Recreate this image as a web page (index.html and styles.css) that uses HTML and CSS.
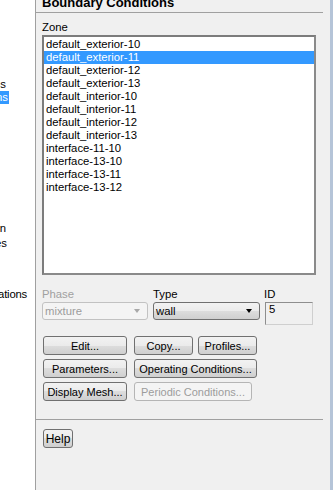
FILE: index.html
```html
<!DOCTYPE html>
<html lang="en">
<head>
    <meta charset="UTF-8">
    <meta name="viewport" content="width=device-width, initial-scale=1.0">
    <title>Boundary Conditions</title>
    <link rel="stylesheet" href="styles.css">
</head>
<body>
    <div class="window">
        <!-- tree on the left, cut off by the panel -->
        <div class="tree">
            <div class="tree-row row-cell"><span>Cell Zone Conditions</span></div>
            <div class="tree-row row-bc"><span class="tree-sel">Boundary Conditions</span></div>
            <div class="tree-row row-init"><span>Solution Initialization</span></div>
            <div class="tree-row row-calc"><span>Calculation Activities</span></div>
            <div class="tree-row row-graph"><span>Graphics and Animations</span></div>
        </div>

        <!-- task panel -->
        <div class="panel">
            <div class="panel-title">Boundary Conditions</div>
            <div class="rule"></div>

            <div class="panel-body">
                <div class="label zone-label">Zone</div>
                <ul class="zone-list">
                    <li>default_exterior-10</li>
                    <li class="selected">default_exterior-11</li>
                    <li>default_exterior-12</li>
                    <li>default_exterior-13</li>
                    <li>default_interior-10</li>
                    <li>default_interior-11</li>
                    <li>default_interior-12</li>
                    <li>default_interior-13</li>
                    <li>interface-11-10</li>
                    <li>interface-13-10</li>
                    <li>interface-13-11</li>
                    <li>interface-13-12</li>
                </ul>

                <div class="fields">
                    <div class="field field-phase">
                        <div class="label label-off">Phase</div>
                        <div class="combo combo-off">
                            <span>mixture</span>
                            <i class="arrow arrow-off"></i>
                        </div>
                    </div>
                    <div class="field field-type">
                        <div class="label">Type</div>
                        <div class="combo">
                            <span>wall</span>
                            <i class="arrow"></i>
                        </div>
                    </div>
                    <div class="field field-id">
                        <div class="label label-id">ID</div>
                        <div class="idbox">5</div>
                    </div>
                </div>

                <div class="buttons">
                    <div class="btn-row">
                        <button class="btn btn-wide">Edit...</button>
                        <button class="btn btn-small">Copy...</button>
                        <button class="btn btn-small">Profiles...</button>
                    </div>
                    <div class="btn-row">
                        <button class="btn btn-wide">Parameters...</button>
                        <button class="btn btn-oper">Operating Conditions...</button>
                    </div>
                    <div class="btn-row">
                        <button class="btn btn-wide">Display Mesh...</button>
                        <button class="btn btn-off btn-periodic" disabled>Periodic Conditions...</button>
                    </div>
                </div>
            </div>

            <div class="rule rule-bottom"></div>
            <div class="panel-foot">
                <button class="btn btn-help">Help</button>
            </div>
        </div>

        <div class="frame-edge"></div>
    </div>
</body>
</html>
```

FILE: styles.css
```css
body {
    margin: 0;
    padding: 0;
    font-family: "Liberation Sans", Arial, sans-serif;
    font-size: 11px;
    color: #000;
    background: #fff;
}
.window {
    display: flex;
    height: 490px;
    overflow: hidden;
}

/* tree */
.tree {
    flex: none;
    width: 35px;
    border-right: 1px solid #a0a0a0;
    background: #fff;
    font-size: 11.3px;
}
.tree-row {
    display: flex;
    justify-content: flex-end;
    height: 13px;
    line-height: 13px;
    overflow: hidden;
    white-space: nowrap;
}
.tree-row span {
    flex: none;
}
.row-cell {
    margin-top: 78px;
    padding-right: 29px;
}
.row-bc {
    padding-right: 26px;
}
.tree-sel {
    background: #3399ff;
    color: #fff;
    padding-right: 1px;
}
.row-init {
    margin-top: 118px;
    padding-right: 29px;
}
.row-calc {
    margin-top: 2px;
    padding-right: 28px;
}
.row-graph {
    margin-top: 38px;
    padding-right: 8px;
    letter-spacing: -0.2px;
}

/* panel */
.panel {
    flex: none;
    width: 294px;
    background: #f0f0f0;
}
.panel-title {
    margin-top: -4px;
    height: 16px;
    line-height: 13px;
    padding-left: 6px;
    font-size: 13px;
    font-weight: bold;
    white-space: nowrap;
}
.rule {
    height: 1px;
    margin-right: 7px;
    background: #a0a0a0;
}
.panel-body {
    padding: 0 14px 0 6px;
}
.label {
    height: 13px;
    line-height: 13px;
    font-size: 11.3px;
}
.zone-label {
    margin-top: 8px;
}
.zone-list {
    list-style: none;
    margin: 1px 0 0;
    padding: 1px 0 0;
    height: 240px;
    box-sizing: border-box;
    border: 2px solid;
    border-color: #7c7c7c #8a8a8a #8a8a8a #7c7c7c;
    background: #fff;
    font-size: 11.3px;
}
.zone-list li {
    height: 13px;
    line-height: 13px;
    padding-left: 2px;
    white-space: nowrap;
}
.zone-list li.selected {
    background: #3399ff;
    color: #fff;
}

/* phase / type / id */
.fields {
    display: flex;
    gap: 5px;
    margin-top: 13px;
}
.field .label {
    margin-bottom: 1px;
}
.field-phase {
    width: 106px;
}
.field-type {
    width: 107px;
}
.field-id {
    width: 48px;
}
.label-off {
    color: #a0a0a0;
}
.label-id {
    margin-left: -1px;
}
.combo {
    display: flex;
    align-items: center;
    justify-content: space-between;
    height: 18px;
    box-sizing: border-box;
    padding: 0 7px 0 2px;
    border: 1px solid #707070;
    border-radius: 3px;
    background: linear-gradient(#f2f2f2 0%, #ebebeb 50%, #dddddd 50%, #cfcfcf 100%);
    font-size: 11.3px;
}
.combo-off {
    border-color: #c2c2c2;
    background: #f4f4f4;
    color: #9c9c9c;
}
.arrow {
    width: 0;
    height: 0;
    border-top: 4px solid #000;
    border-left: 3.5px solid transparent;
    border-right: 3.5px solid transparent;
}
.arrow-off {
    border-top-color: #a8a8a8;
}
.idbox {
    height: 23px;
    box-sizing: border-box;
    padding-left: 3px;
    line-height: 13px;
    border: 1px solid;
    border-color: #8e8e8e #cfcfcf #cfcfcf #8e8e8e;
    background: #f0f0f0;
    font-size: 11.3px;
}

/* buttons */
.buttons {
    margin: 11px 0 0 1px;
}
.btn-row {
    display: flex;
    gap: 5px;
    margin-bottom: 4px;
}
.btn-row:last-child {
    margin-bottom: 0;
}
.btn {
    height: 19px;
    padding: 0;
    box-sizing: border-box;
    border: 1px solid #707070;
    border-radius: 3px;
    background: linear-gradient(#f2f2f2 0%, #ebebeb 50%, #dddddd 50%, #cfcfcf 100%);
    font-family: "Liberation Sans", Arial, sans-serif;
    font-size: 11px;
    color: #000;
    white-space: nowrap;
}
.btn-wide {
    width: 84px;
    margin-right: 2px;
}
.btn-small {
    width: 59px;
}
.btn-oper {
    width: 123px;
}
.btn-periodic {
    width: 118px;
}
.btn-off {
    border-color: #b5b5b5;
    background: #f4f4f4;
    color: #9c9c9c;
}

.rule-bottom {
    margin-top: 18px;
}
.panel-foot {
    padding: 9px 0 0 7px;
}
.btn-help {
    width: 30px;
    font-size: 12px;
}

.frame-edge {
    flex: none;
    width: 3px;
    background: #b5c4d8;
}
```
